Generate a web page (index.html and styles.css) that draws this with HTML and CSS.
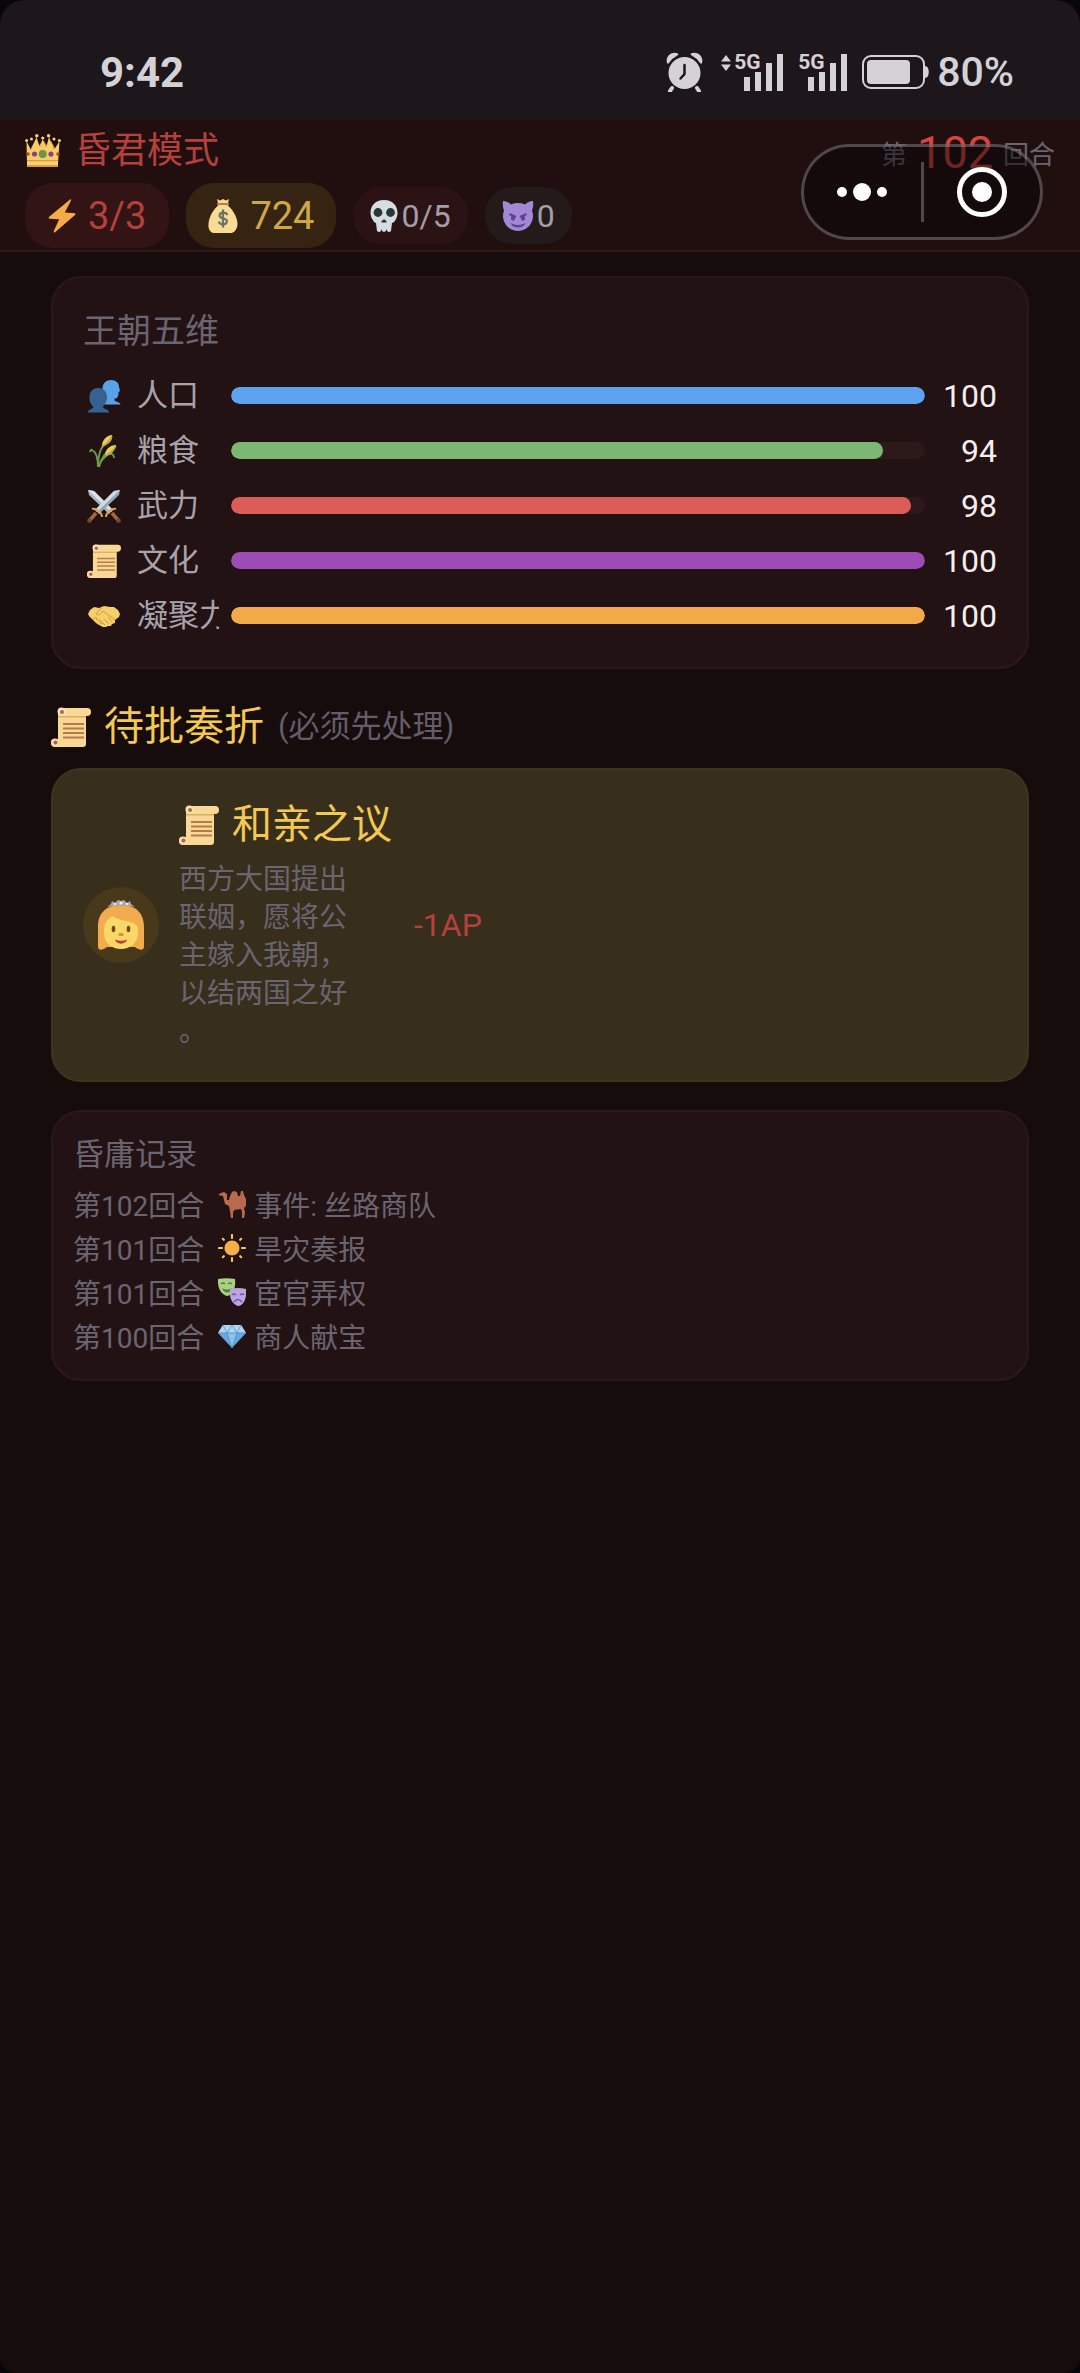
FILE: index.html
```html
<!DOCTYPE html>
<html lang="zh-CN">
<head>
    <meta charset="UTF-8">
    <meta name="viewport" content="width=device-width, initial-scale=1">
    <title>昏君模式</title>
    <link rel="stylesheet" href="styles.css">
</head>
<body>
<svg class="sprite" aria-hidden="true">
    <symbol id="scroll" viewBox="0 0 40 40">
        <path d="M10 1h26a4 4 0 0 1 0 8h-1v28a3 3 0 0 1-3 3H4a4 4 0 1 1 0-8h3V4a3 3 0 0 1 3-3z" fill="#f8d894"/>
        <path d="M7 9h28v1.500H7z" fill="#dcae62"/>
        <circle cx="10.500" cy="4.500" r="4" fill="#fbe3bb"/>
        <circle cx="11" cy="5" r="2" fill="#a56a4a"/>
        <circle cx="4" cy="35.500" r="4" fill="#fbd9ae"/>
        <circle cx="4.500" cy="35.500" r="2" fill="#a56a4a"/>
        <path d="M12 17h21M12 21.500h21M12 26h21M12 30.500h21" stroke="#b67b4b" stroke-width="1.800"/>
    </symbol>
    <symbol id="crown" viewBox="0 0 36 33">
        <path d="M6 14L10 7l3 6 5-7 5 7 3-6 4 7v10H6z" fill="#e5953e"/>
        <path d="M2 30L1.500 7 6 16 11.500 3 15 14 17.500 5 21 14 24 3 29 16 34.500 7 33 30z" fill="#f6ce68"/>
        <g fill="#f9d775"><circle cx="1.600" cy="6.500" r="1.500"/><circle cx="6.500" cy="5" r="1.500"/><circle cx="11.800" cy="1.700" r="1.700"/><circle cx="17.700" cy="4" r="1.600"/><circle cx="23.600" cy="1.700" r="1.700"/><circle cx="29" cy="5" r="1.500"/><circle cx="34.400" cy="6.500" r="1.500"/></g>
        <circle cx="17.700" cy="20" r="4" fill="#6f9444"/>
        <circle cx="9.500" cy="20" r="2.600" fill="#8d3d97"/>
        <circle cx="26" cy="20" r="2.600" fill="#8d3d97"/>
        <circle cx="3" cy="20" r="1.800" fill="#b84038"/>
        <circle cx="33" cy="20" r="1.800" fill="#b84038"/>
        <path d="M2 26h31v1.500H2zM2 31h31v2H2z" fill="#e29b3e"/>
        <path d="M2 27.500h31V31H2z" fill="#f9d273"/>
    </symbol>
    <symbol id="bolt" viewBox="0 0 28 34">
        <path d="M22 .5L1.200 17.800c-1 1-.7 1.800.5 1.900l9.500.5L5.800 32c-.5 1.500.5 2 1.500 1L27 16c1-1 .7-1.700-.5-1.800l-9.700-.7 6-11.500c.5-1.300 0-2-.8-1.500z" fill="#f6ac45"/>
    </symbol>
    <symbol id="bag" viewBox="0 0 30 34">
        <path d="M9 0l3 1.500L15 0l3 1.500L21 0l-1.500 6C24 10 29 17 29.500 24c.3 4-2 9.500-6 10H6c-4.500-.5-6-5-5.500-9C1 17 6 10 10.500 6z" fill="#f8dc94"/>
        <path d="M9 5h12" stroke="#bd7a50" stroke-width="2"/>
        <path d="M19.500 16c-1-2-3-2.700-5-2.300-3.500.5-4 4.300-.5 5.300l2.500.8c3.500 1 3 5-.5 5.500-2.500.3-4.500-.6-5.300-2.600M15 10.500v18" fill="none" stroke="#6b7364" stroke-width="2.200"/>
    </symbol>
    <symbol id="skull" viewBox="0 0 28 32">
        <path d="M14 0C5 0 .5 6 .5 13c0 3 1 5 2 6.500C3.500 21 4 22.500 6 23l1 8c2 1.500 4 1.300 4.500-2 .5 3.800 4.500 3.800 5 0 .5 3.300 3 3.500 4.500 2l1-8c2-.5 3-2 3.700-3.500 1-1.500 1.800-3.500 1.800-6.500C27.500 6 23 0 14 0z" fill="#d5dde1"/>
        <circle cx="8" cy="12.500" r="4.400" fill="#29343b"/>
        <circle cx="20.500" cy="12.500" r="4.400" fill="#29343b"/>
        <path d="M14 19.500c-1.500 0-3 2-2.500 3h5c.5-1-1-3-2.500-3z" fill="#29343b"/>
    </symbol>
    <symbol id="imp" viewBox="0 0 32 32">
        <path d="M1 1c3 0 6 1.500 8 3.500a18 18 0 0 1 14 0C25 2.500 28 1 31 1c.5 4 0 7-1 9.500A15 15 0 1 1 2 10.500C1 8 .5 5 1 1z" fill="#a388d6"/>
        <path d="M7.500 14l6.500 3M24.500 14L18 17" stroke="#5d458d" stroke-width="2"/>
        <ellipse cx="11" cy="18" rx="2" ry="2.800" fill="#5d458d"/>
        <ellipse cx="21" cy="18" rx="2" ry="2.800" fill="#5d458d"/>
        <path d="M8.500 23q7.500 4 15 0c-2 6-13 6-15 0z" fill="#5d458d"/>
    </symbol>
    <symbol id="people" viewBox="0 0 34 34">
        <path d="M15 25.500v-1c0-2 4-2 4.500-4.500-3-2-4.500-6-4-11C16 4 19 1 24 1c5 0 8 3 8 7l1 4-1.500 1c0 4-.5 6.500-4 6.500v1.500c0 2 5.500 1.500 6 4.500z" fill="#5aa2e8"/>
        <path d="M1 33.500c0-4 5.500-3 5.500-5.500-2.500-2-4-5-4-9C2.500 12 6 9 11 9c5 0 9 3 9 9 0 5-2 7.500-4 9.500 0 3 6 2 6 6z" fill="#356292"/>
    </symbol>
    <symbol id="wheat" viewBox="0 0 34 34">
        <path d="M11 33Q11 14 20 8M12 33Q15 20 26 13M11 33Q11 19 5 16Q4 15 3 18M13 29Q20 19 25 20Q27 21 27 24" fill="none" stroke="#6b9c48" stroke-width="1.900"/>
        <path d="M15 12C15 6 20 1 25 1c1 5-3 10-10 11z" fill="#f5cb57"/>
        <path d="M18 22c0-7 5-11 11-11-1 6-5 10-11 11z" fill="#f5cb57"/>
        <path d="M15 13Q22 9 25 2M18 22Q25 19 29 12" fill="none" stroke="#a8a645" stroke-width="1.600"/>
    </symbol>
    <symbol id="swords" viewBox="0 0 34 34">
        <path d="M1 1l6 1 19 19-4 4L2 6z" fill="#a7bac6"/>
        <path d="M1 1l6 1 19 19-2 2z" fill="#d8e4ea"/>
        <path d="M19 28c0-4 6-9 10-8" fill="none" stroke="#e2a354" stroke-width="2"/>
        <path d="M25 24l6 7" stroke="#a8663c" stroke-width="3.600"/>
        <path d="M33 1l-6 1L8 21l4 4L32 6z" fill="#90a6b5"/>
        <path d="M33 1l-6 1L8 21l2 2z" fill="#cfdce4"/>
        <path d="M15 28c0-4-6-9-10-8" fill="none" stroke="#e2a354" stroke-width="2"/>
        <path d="M9 24l-6 7" stroke="#a8663c" stroke-width="3.600"/>
        <circle cx="2.500" cy="31.500" r="2.300" fill="#75483a"/>
        <circle cx="31.500" cy="31.500" r="2.300" fill="#75483a"/>
    </symbol>
    <symbol id="hands" viewBox="0 0 34 34">
        <path d="M1 15l2-4 4-3 5 1 5-2 6 1 4 0 4 3 2 4-1 3-4 3 0 3-3 1-1 2-3 0-2 1-3 0-4-2-3-2-4-4-3-3z" fill="#f5cf68"/>
        <path d="M14 9l-5 6c2 2 5 0 7-3l12 9M21 18l4 5M17 20l5 5M14 22l4 4" fill="none" stroke="#d49b3d" stroke-width="1"/>
        <path d="M6 20l3-2 1 3 3 0 0 3 3 1" fill="none" stroke="#d49b3d" stroke-width="1"/>
    </symbol>
    <symbol id="princess" viewBox="0 0 48 52">
        <path d="M24 6C8 6 1 15 1 28v19c0 5 4 4.500 9 1h28c5 3.500 9 4 9-1V28C47 15 40 6 24 6z" fill="#f2ab4e"/>
        <path d="M7 29c0-3 3-10 9-12 6 6 24 4 25 12v5c0 10-8 16-17 16S7 44 7 34z" fill="#f9d867"/>
        <path d="M10 8l4-3 1-3 3 2 3-3 3 1 3-1 3 3 3-2 1 3 4 3c-8-2-20-2-28 0z" fill="#a9aaa8"/>
        <circle cx="18" cy="5" r="1.300" fill="#e9eeee"/><circle cx="24" cy="4" r="1.600" fill="#e9eeee"/><circle cx="30" cy="5" r="1.300" fill="#e9eeee"/>
        <ellipse cx="16.500" cy="30" rx="1.800" ry="3.200" fill="#6d4b25"/>
        <ellipse cx="31.500" cy="30" rx="1.800" ry="3.200" fill="#6d4b25"/>
        <ellipse cx="24" cy="35.500" rx="2.800" ry="1.500" fill="#d88b3e"/>
        <path d="M18 40.500q6 2.500 12 0c-1 5.500-11 5.500-12 0z" fill="#b93e32"/>
    </symbol>
    <symbol id="camel" viewBox="0 0 28 28">
        <path d="M0 5l3-2 3-1 3 2 0 6 2 0 1-4 2-4 2-1 3 1 1 4 2 0 1-5 2 0 1 4 2 4 0 4 2 4-1 1-2-2-1 3 1 3-1 7h-2l0-7-1-3-7 1-1 3 0 6h-2l-1-8-1-5-4-2-2-8z" fill="#b76a4c"/>
    </symbol>
    <symbol id="sun" viewBox="0 0 28 28">
        <circle cx="14" cy="14" r="7.600" fill="#f5ae48"/>
        <path d="M14 1v3M14 24v3M1 14h3M24 14h3M4.800 4.800l1 1M22.200 22.200l1 1M4.800 23.200l1-1M22.200 5.800l1-1" stroke="#f7c35b" stroke-width="2.200" stroke-linecap="round"/>
    </symbol>
    <symbol id="masks" viewBox="0 0 28 28">
        <path d="M0 1q8.500-1.500 17 0c1 9-2 16-8 17C2 16-.5 9 0 1z" fill="#a9d184"/>
        <path d="M3 6q2-2 4 0M10 6q2-2 4 0" fill="none" stroke="#55803c" stroke-width="1.300"/>
        <path d="M4 10q5 3 10 0c-1 6-8 6-10 0z" fill="#55803c"/>
        <path d="M12 11q8-2 16 0c1 9-2 16-8 17-6-2-9-8-8-17z" fill="#bba5e3"/>
        <path d="M14 17q2-2 4 0M22 17q2-2 4 0M16 24q4-5 8 0" fill="none" stroke="#75589d" stroke-width="1.500"/>
    </symbol>
    <symbol id="gem" viewBox="0 0 28 28">
        <path d="M5 3h18l5 8-14 15L0 11z" fill="#67a9e5"/>
        <path d="M5 3h18l5 8H0z" fill="#add5f2"/>
        <path d="M9 11h10l-5 15z" fill="#8bc2ee"/>
        <path d="M5 3l4 8 5-8 5 8 4-8M0 11h28M9 11l5 15 5-15" fill="none" stroke="#4f8cc7" stroke-width=".8"/>
    </symbol>
</svg>

<div class="screen">
    <div class="status">
        <span class="time">9:42</span>
        <div class="status-right">
            <svg class="alarm" viewBox="0 0 37 40" width="37" height="40">
                <path d="M6 36l-2 3M31 36l2 3" stroke="#d5d2d7" stroke-width="4" stroke-linecap="round"/>
                <circle cx="18.500" cy="21" r="16" fill="#d5d2d7"/>
                <path d="M1 11C-1 4 6-1 12 1.500c1 1 0 1.700-1 2.200A19 19 0 0 0 3 11c-.7 1-1.700 1-2 0zM36 11c2-7-5-12-11-9.500-1 1 0 1.700 1 2.200a19 19 0 0 1 8 7.300c.7 1 1.700 1 2 0z" fill="#d5d2d7"/>
                <path d="M18.500 13v9l-4 4.500" fill="none" stroke="#1d161b" stroke-width="2.500" stroke-linecap="round"/>
            </svg>
            <svg class="arrows" viewBox="0 0 10 16" width="10" height="16">
                <path d="M5 0l5 6.500H0zM5 16l5-6.500H0z" fill="#d5d2d7"/>
            </svg>
            <div class="signal">
                <span class="net">5G</span>
                <svg viewBox="0 0 39 38" width="39" height="38"><path d="M0 24h6v14H0zM11 19h6v19h-6zM22 10h6v28h-6zM33 1h6v37h-6z" fill="#d5d2d7"/></svg>
            </div>
            <div class="signal">
                <span class="net">5G</span>
                <svg viewBox="0 0 39 38" width="39" height="38"><path d="M0 24h6v14H0zM11 19h6v19h-6zM22 10h6v28h-6zM33 1h6v37h-6z" fill="#d5d2d7"/></svg>
            </div>
            <svg class="battery" viewBox="0 0 67 34" width="67" height="34">
                <rect x="1" y="1" width="61" height="32" rx="8" fill="none" stroke="#d5d2d7" stroke-width="2"/>
                <rect x="5" y="5" width="43" height="24" rx="4" fill="#d5d2d7"/>
                <path d="M63 11c5 0 5 12 0 12z" fill="#d5d2d7"/>
            </svg>
            <span class="percent">80%</span>
        </div>
    </div>

    <header class="header">
        <div class="header-top">
            <h1 class="mode"><svg class="ico-crown"><use href="#crown"/></svg>昏君模式</h1>
            <div class="round">第<b>102</b>回合</div>
        </div>
        <div class="chips">
            <span class="chip chip-ap"><svg class="ico-bolt"><use href="#bolt"/></svg>3/3</span>
            <span class="chip chip-gold"><svg class="ico-bag"><use href="#bag"/></svg>724</span>
            <span class="chip small chip-skull"><svg class="ico-skull"><use href="#skull"/></svg>0/5</span>
            <span class="chip small chip-imp"><svg class="ico-imp"><use href="#imp"/></svg>0</span>
        </div>
        <div class="capsule">
            <button type="button" aria-label="更多">
                <svg viewBox="0 0 52 20" width="52" height="20" fill="#fff"><circle cx="6" cy="10" r="5"/><circle cx="26" cy="10" r="9"/><circle cx="46" cy="10" r="5"/></svg>
            </button>
            <button type="button" aria-label="关闭">
                <svg viewBox="0 0 50 50" width="50" height="50"><circle cx="25" cy="25" r="22.500" fill="none" stroke="#fff" stroke-width="5"/><circle cx="25" cy="25" r="10" fill="#fff"/></svg>
            </button>
        </div>
    </header>

    <main class="main">
        <section class="card stats">
            <h2 class="stats-title">王朝五维</h2>
            <div class="stat">
                <svg class="stat-icon"><use href="#people"/></svg>
                <span class="stat-name">人口</span>
                <div class="bar"><div class="fill blue" style="width: 100%"></div></div>
                <span class="stat-num">100</span>
            </div>
            <div class="stat">
                <svg class="stat-icon"><use href="#wheat"/></svg>
                <span class="stat-name">粮食</span>
                <div class="bar"><div class="fill green" style="width: 94%"></div></div>
                <span class="stat-num">94</span>
            </div>
            <div class="stat">
                <svg class="stat-icon"><use href="#swords"/></svg>
                <span class="stat-name">武力</span>
                <div class="bar"><div class="fill red" style="width: 98%"></div></div>
                <span class="stat-num">98</span>
            </div>
            <div class="stat">
                <svg class="stat-icon"><use href="#scroll"/></svg>
                <span class="stat-name">文化</span>
                <div class="bar"><div class="fill purple" style="width: 100%"></div></div>
                <span class="stat-num">100</span>
            </div>
            <div class="stat">
                <svg class="stat-icon"><use href="#hands"/></svg>
                <span class="stat-name">凝聚力</span>
                <div class="bar"><div class="fill orange" style="width: 100%"></div></div>
                <span class="stat-num">100</span>
            </div>
        </section>

        <h2 class="section-title"><svg class="ico-scroll"><use href="#scroll"/></svg>待批奏折<small>(必须先处理)</small></h2>
        <section class="card memo">
            <div class="avatar"><svg><use href="#princess"/></svg></div>
            <div class="memo-body">
                <h3 class="memo-title"><svg class="ico-scroll"><use href="#scroll"/></svg>和亲之议</h3>
                <p class="memo-text">西方大国提出联姻，愿将公主嫁入我朝，以结两国之好。</p>
            </div>
            <span class="cost">-1AP</span>
        </section>

        <section class="card log">
            <h2 class="log-title">昏庸记录</h2>
            <ul>
                <li><span>第102回合</span><svg><use href="#camel"/></svg>事件: 丝路商队</li>
                <li><span>第101回合</span><svg><use href="#sun"/></svg>旱灾奏报</li>
                <li><span>第101回合</span><svg><use href="#masks"/></svg>宦官弄权</li>
                <li><span>第100回合</span><svg><use href="#gem"/></svg>商人献宝</li>
            </ul>
        </section>
    </main>
</div>
</body>
</html>
```

FILE: styles.css
```css
* {
    padding: 0;
    margin: 0;
    box-sizing: border-box;
    list-style: none;
}

body {
    background: #070608;
    font-family: Roboto, "Noto Sans CJK SC", sans-serif;
    color: #6a6570;
}

h1, h2, h3, b, small {
    font-weight: 400;
}

svg {
    flex: none;
}

.sprite {
    display: none;
}

.screen {
    min-height: 100vh;
    background: #170c0c;
    border-radius: 24px 24px 16px 16px;
    overflow: hidden;
}

/* 状态栏 */
.status {
    height: 120px;
    padding: 24px 66px 0 100px;
    display: flex;
    align-items: center;
    justify-content: space-between;
    background: #1d161b;
    color: #d5d2d7;
    font-weight: 500;
}

.time {
    font-size: 42px;
    font-weight: 700;
}

.status-right {
    display: flex;
    align-items: center;
}

.arrows {
    margin: 0 3px 18px 18px;
}

.signal {
    display: flex;
    align-items: flex-start;
    margin-right: 15px;
}

.net {
    width: 10px;
    font-size: 21px;
    line-height: 18px;
    font-weight: 700;
    white-space: nowrap;
}

.percent {
    margin-left: 8px;
    font-size: 41px;
}

/* 顶部信息 */
.header {
    position: relative;
    background: #210f10;
    border-bottom: 2px solid #331718;
    padding: 2px 25px;
}

.header-top {
    display: flex;
    justify-content: space-between;
    align-items: center;
    height: 61px;
}

.mode {
    display: flex;
    align-items: center;
    gap: 14px;
    font-size: 36px;
    line-height: 44px;
    padding-bottom: 4px;
    color: #b5403c;
}

.round {
    display: flex;
    align-items: center;
    gap: 10px;
    font-size: 26px;
}

.round b {
    font-size: 45px;
    color: #d8443f;
}

.chips {
    display: flex;
    align-items: center;
    gap: 17px;
}

.chip {
    display: flex;
    align-items: center;
    gap: 12px;
    height: 65px;
    padding: 0 22px;
    border-radius: 28px;
    font-size: 38px;
}

.small {
    gap: 3px;
    height: 57px;
    padding: 0 17px;
    font-size: 32px;
    color: #a39ea8;
}

.chip-ap {
    padding: 0 23px;
    background: #331415;
    color: #b5403c;
}

.chip-gold {
    background: #352411;
    color: #cfa745;
}

.chip-skull {
    background: #2b1315;
}

.chip-imp {
    background: #251a1a;
}

.ico-crown {
    width: 36px;
    height: 33px;
}

.ico-bolt {
    width: 28px;
    height: 34px;
}

.ico-bag {
    width: 30px;
    height: 34px;
}

.ico-skull {
    width: 28px;
    height: 32px;
}

.ico-imp {
    width: 32px;
    height: 32px;
}

.ico-scroll {
    width: 40px;
    height: 40px;
}

.capsule {
    position: absolute;
    top: 24px;
    right: 37px;
    display: flex;
    align-items: center;
    width: 242px;
    height: 96px;
    border: 3px solid rgba(255, 255, 255, 0.25);
    border-radius: 48px;
    background: rgba(8, 5, 5, 0.5);
}

.capsule button {
    flex: 1;
    height: 60px;
    display: flex;
    align-items: center;
    justify-content: center;
    border: 0;
    background: none;
}

.capsule button + button {
    border-left: 3px solid rgba(255, 255, 255, 0.25);
}

/* 内容 */
.main {
    padding: 24px 51px;
}

.card {
    border: 2px solid #2d1819;
    border-radius: 30px;
    background: #231213;
}

.stats {
    padding: 28px 30px 24px;
}

.stats-title {
    margin-bottom: 12px;
    font-size: 34px;
    line-height: 50px;
}

.stat {
    display: flex;
    align-items: center;
    gap: 12px;
    height: 55px;
}

.stat-icon {
    width: 42px;
    height: 34px;
}

.stat-name {
    width: 82px;
    overflow: hidden;
    white-space: nowrap;
    font-size: 31px;
    line-height: 44px;
    color: #a8a2ab;
}

.bar {
    flex: 1;
    height: 17px;
    border-radius: 9px;
    background: #2e191a;
    overflow: hidden;
}

.fill {
    height: 100%;
    border-radius: 9px;
}

.blue { background: #5ca2ee; }
.green { background: #7cb874; }
.red { background: #dc5d57; }
.purple { background: #9d4bb5; }
.orange { background: #f2aa49; }

.stat-num {
    width: 60px;
    text-align: right;
    font-size: 32px;
    color: #f6eeee;
}

.section-title {
    display: flex;
    align-items: center;
    margin: 29px 0 12px;
    font-size: 40px;
    line-height: 58px;
    color: #f3c853;
}

.section-title .ico-scroll,
.memo-title .ico-scroll {
    margin-right: 13px;
}

.section-title small {
    margin-left: 14px;
    font-size: 31px;
    color: #625d69;
}

.memo {
    display: flex;
    align-items: center;
    padding: 29px 30px;
    border-color: #40341f;
    background: #382e1c;
}

.avatar {
    display: flex;
    align-items: center;
    justify-content: center;
    width: 76px;
    height: 76px;
    margin-right: 20px;
    border-radius: 50%;
    background: #49391b;
}

.avatar svg {
    width: 48px;
    height: 52px;
}

.memo-title {
    display: flex;
    align-items: center;
    margin-bottom: 10px;
    font-size: 40px;
    line-height: 52px;
    color: #f3c853;
}

/* 每行六个字，标点也占一格 */
.memo-text {
    width: 174px;
    font-size: 28px;
    line-height: 38px;
    line-break: anywhere;
}

.cost {
    margin-left: 22px;
    font-size: 32px;
    color: #b5403c;
}

.log {
    margin-top: 28px;
    padding: 20px 20px 21px;
}

.log-title {
    margin-bottom: 4px;
    font-size: 31px;
    line-height: 46px;
}

.log li {
    display: flex;
    align-items: center;
    height: 44px;
    font-size: 28px;
}

.log svg {
    width: 28px;
    height: 28px;
    margin: 0 8px 0 14px;
}
```
